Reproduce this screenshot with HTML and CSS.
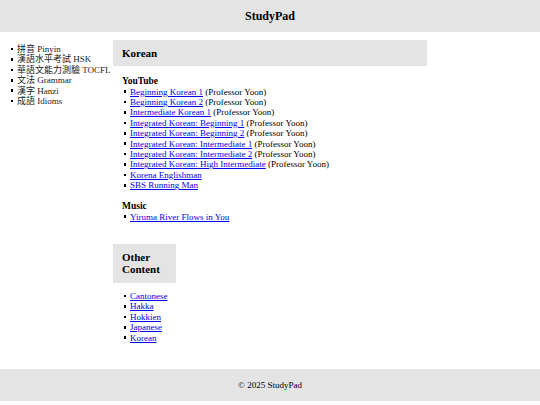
FILE: index.html
```html
<!DOCTYPE html>
<html>
<head>
<meta charset="utf-8">
<link rel="stylesheet" href="styles.css">
</head>
<body>
<header class="site-header">StudyPad</header>
<div class="layout">
  <nav class="sidebar">
    <ul class="nav-list">
      <li>拼音 Pinyin</li>
      <li>漢語水平考試 HSK</li>
      <li>華語文能力測驗 TOCFL</li>
      <li>文法 Grammar</li>
      <li>漢字 Hanzi</li>
      <li>成語 Idioms</li>
    </ul>
  </nav>
  <main class="main">
    <section class="korean">
      <h2 class="box-title">Korean</h2>
      <h3 class="sub-title">YouTube</h3>
      <ul class="link-list">
        <li><a href="#">Beginning Korean 1</a> (Professor Yoon)</li>
        <li><a href="#">Beginning Korean 2</a> (Professor Yoon)</li>
        <li><a href="#">Intermediate Korean 1</a> (Professor Yoon)</li>
        <li><a href="#">Integrated Korean: Beginning 1</a> (Professor Yoon)</li>
        <li><a href="#">Integrated Korean: Beginning 2</a> (Professor Yoon)</li>
        <li><a href="#">Integrated Korean: Intermediate 1</a> (Professor Yoon)</li>
        <li><a href="#">Integrated Korean: Intermediate 2</a> (Professor Yoon)</li>
        <li><a href="#">Integrated Korean: High Intermediate</a> (Professor Yoon)</li>
        <li><a href="#">Korena Englishman</a></li>
        <li><a href="#">SBS Running Man</a></li>
      </ul>
      <h3 class="sub-title music">Music</h3>
      <ul class="link-list">
        <li><a href="#">Yiruma River Flows in You</a></li>
      </ul>
    </section>
    <section class="other">
      <h2 class="box-title other-title">Other Content</h2>
      <ul class="link-list other-list">
        <li><a href="#">Cantonese</a></li>
        <li><a href="#">Hakka</a></li>
        <li><a href="#">Hokkien</a></li>
        <li><a href="#">Japanese</a></li>
        <li><a href="#">Korean</a></li>
      </ul>
    </section>
  </main>
</div>
<footer class="site-footer">© 2025 StudyPad</footer>
</body>
</html>
```
FILE: styles.css
```css
html, body {
  margin: 0;
  padding: 0;
  background: #fff;
  color: #000;
  font-family: "Liberation Serif", "Noto Sans CJK TC", serif;
  font-size: 9px;
}
.site-header {
  background: #e4e4e4;
  height: 32px;
  display: flex;
  align-items: center;
  justify-content: center;
  font-weight: bold;
  font-size: 12px;
}
.layout {
  display: flex;
  padding-top: 8px;
}
.sidebar {
  width: 113px;
  flex: none;
}
.nav-list {
  margin: 4px 0 0 0;
  padding-left: 17px;
  list-style: none;
  color: #222;
}
.nav-list li, .link-list li {
  line-height: 10.4px;
  list-style: none;
}
.nav-list li::before, .link-list li::before {
  content: "";
  display: inline-block;
  width: 2.6px;
  height: 2.6px;
  background: #000;
  margin-left: -6.2px;
  margin-right: 3.6px;
  vertical-align: 1.6px;
}
.main {
  width: 314px;
}
.box-title {
  margin: 0;
  background: #e4e4e4;
  font-size: 11px;
  font-weight: bold;
  line-height: 13px;
  padding: 6.5px 9px;
}
.sub-title {
  margin: 9.5px 0 0 9px;
  font-size: 9.5px;
  line-height: 11px;
  font-weight: bold;
}
.sub-title.music {
  margin-top: 10px;
}
.link-list {
  margin: 0;
  padding-left: 17px;
}
.link-list a {
  color: #0000ee;
}
.other {
  margin-top: 22px;
}
.other-title {
  width: 45px;
  line-height: 12.5px;
  padding: 7px 9px;
}
.other-list {
  margin-top: 8px;
}
.site-footer {
  margin-top: 26px;
  background: #e4e4e4;
  height: 32px;
  display: flex;
  align-items: center;
  justify-content: center;
  font-size: 9px;
}
```
